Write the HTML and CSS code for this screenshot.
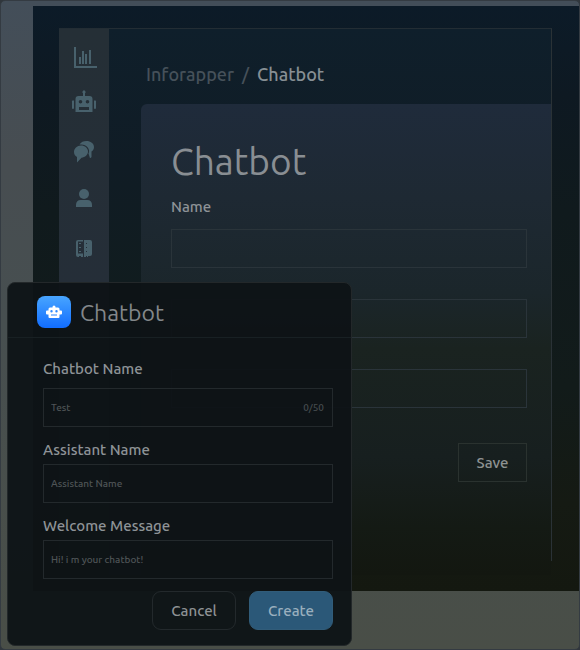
FILE: index.html
```
<!DOCTYPE html>
<html lang="en">
<head>
    <meta charset="UTF-8">
    <meta name="viewport" content="width=device-width, initial-scale=1.0">
    <title>Inforapper - Chatbot</title>
    <link rel="stylesheet" href="styles.css">
</head>
<body>
    <div class="page">
        <div class="screen">
            <div class="shell">
                <nav class="sidebar">
                    <a href="#" aria-label="Statistics">
                        <svg width="24" height="24" viewBox="0 0 24 24"><path d="M2 5h2v19h21v2H2zM7 15h2v7H7zM10 9h2v13h-2zM13 12h2v10h-2zM17 8h2v14h-2z"/></svg>
                    </a>
                    <a href="#" aria-label="Chatbot">
                        <svg width="24" height="24" viewBox="0 0 24 24"><path fill-rule="evenodd" d="M11 5.500V3.300a1.600 1.600 0 1 1 2 0V6h4.500A3 3 0 0 1 20.500 9v13h-17V9a3 3 0 0 1 3-3H11zM8.500 10a1.800 1.800 0 1 0 0 3.600 1.800 1.800 0 0 0 0-3.600zM15.500 10a1.800 1.800 0 1 0 0 3.600 1.800 1.800 0 0 0 0-3.600zM7 17v3h10v-3zM2 11v7a1 1 0 0 1-2 0v-6a1 1 0 0 1 2-1zM22 11v7a1 1 0 0 0 2 0v-6a1 1 0 0 0-2-1z"/></svg>
                    </a>
                    <a href="#" aria-label="Messages">
                        <svg width="24" height="24" viewBox="0 -2 24 24"><path d="M7.500 4.500C9 2 11.500 1 14.500 1c4 0 7.500 2.500 7.500 6 0 2-1 3.500-2.500 4.500V17c-1 1.500-2 1-2-.5l-1-3C19 9 14 3.500 7.500 4.500z"/><path d="M9 5.500c4 0 7 2.700 7 6s-3 6-6.500 6.200L5 22.500V17c-2-1-3-3-3-5 0-3.500 3-6.500 7-6.500z"/></svg>
                    </a>
                    <a href="#" aria-label="Profile">
                        <svg width="24" height="24" viewBox="0 0 24 24"><circle cx="12" cy="8" r="5"/><path d="M4 21v-2.500c0-2.500 2-4.500 4.500-4.500h7c2.500 0 4.500 2 4.500 4.500V21z"/></svg>
                    </a>
                    <a href="#" aria-label="Contacts">
                        <svg width="24" height="24" viewBox="0 -2 24 24"><path fill-rule="evenodd" d="M6 4h5v17H9v-1H7v1H6a2 2 0 0 1-2-2V6a2 2 0 0 1 2-2zM6 5.500v12h5v-12zM12 4h6a2 2 0 0 1 2 2v12a2 2 0 0 1-2 2h-2v1h-1v-1h-1v1h-2zM14 7v1h1V7zM14 11v1h1v-1zM14 15v1h1v-1z"/><path d="M7 7h2v1H7zM7 11h2v1H7zM7 15h2v1H7z"/></svg>
                    </a>
                </nav>

                <main class="content">
                    <div class="breadcrumb"><a href="#">Inforapper</a><span>/</span><strong>Chatbot</strong></div>
                    <form class="card">
                        <h1>Chatbot</h1>
                        <label for="name">Name</label>
                        <input type="text" id="name" name="name">
                        <input type="text" name="assistant" aria-label="Assistant">
                        <input type="text" name="message" aria-label="Message">
                        <button class="btn-save" type="button">Save</button>
                    </form>
                </main>
            </div>
        </div>

        <div class="modal" role="dialog" aria-labelledby="modal-title">
            <div class="modal-header">
                <span class="modal-icon">
                    <svg width="18" height="18" viewBox="0 0 18 18"><path fill-rule="evenodd" d="M7.500 4.500V4a1.500 1.500 0 0 1 3 0v.500H13A1.500 1.500 0 0 1 14.500 6v1.500H16A1 1 0 0 1 17 8.500v2a1 1 0 0 1-1 1h-1.500V14a1 1 0 0 1-1 1h-9a1 1 0 0 1-1-1v-2.500H2a1 1 0 0 1-1-1v-2a1 1 0 0 1 1-1h1.500V6A1.500 1.500 0 0 1 5 4.500zM6.500 7a1.200 1.200 0 1 0 0 2.400 1.200 1.200 0 0 0 0-2.400zM11.500 7a1.200 1.200 0 1 0 0 2.400 1.200 1.200 0 0 0 0-2.400zM6 11.500v1h6v-1z"/></svg>
                </span>
                <h2 id="modal-title">Chatbot</h2>
            </div>
            <form class="modal-form">
                <label for="chatbot-name">Chatbot Name</label>
                <div class="input-box">
                    <input type="text" id="chatbot-name" placeholder="Test" maxlength="50">
                    <span class="counter">0/50</span>
                </div>

                <label for="assistant-name">Assistant Name</label>
                <input type="text" id="assistant-name" placeholder="Assistant Name">

                <label for="welcome">Welcome Message</label>
                <input type="text" id="welcome" placeholder="Hi! i m your chatbot!">

                <div class="actions">
                    <button class="btn-cancel" type="button">Cancel</button>
                    <button class="btn-create" type="button">Create</button>
                </div>
            </form>
        </div>
    </div>
</body>
</html>
```
FILE: styles.css
```
* {
    margin: 0;
    padding: 0;
    box-sizing: border-box;
    font-family: Ubuntu, "Noto Sans", sans-serif;
}
body {
    background-color: #30363c;
}
.page {
    position: relative;
    min-height: 100vh;
    padding: 5px 0 58px 32px;
    border: 1px solid #343b42;
    border-radius: 5px;
    background: linear-gradient(180deg, #434e59 0%, #474d51 25%, #474f50 50%, #494e47 100%);
}
.screen {
    padding: 22px 27px 30px 26px;
    background: linear-gradient(180deg, #0c1b28 0%, #0e1922 15%, #101a1d 35%, #121b1a 65%, #151a13 85%, #141810 100%);
}
.shell {
    display: flex;
    border-top: 1px solid #232d34;
    border-right: 1px solid #2a3236;
}
.sidebar {
    display: flex;
    flex-direction: column;
    align-items: center;
    gap: 24px;
    width: 50px;
    padding-top: 13px;
    background: linear-gradient(180deg, #252f36, #252e38 50%, #20291f);
}
.sidebar a,
.sidebar svg {
    display: block;
}
.sidebar svg {
    fill: #48616c;
    overflow: visible;
}
.content {
    flex: 1;
    margin-bottom: -14px;
    padding: 32px 0 0 32px;
    background: linear-gradient(180deg, #0f1f2b, #101c25 25%, #111c1b 60%, #151a13);
}
.breadcrumb {
    display: flex;
    gap: 8px;
    padding-left: 5px;
    margin-bottom: 17px;
    font-size: 18px;
    line-height: 26px;
    font-weight: 500;
    color: #46515a;
}
.breadcrumb a {
    color: #46515a;
    text-decoration: none;
}
.breadcrumb strong {
    font-weight: 500;
    color: #878f94;
}
.card {
    display: flex;
    flex-direction: column;
    padding: 34px 24px 93px 30px;
    border-radius: 6px 0 0 0;
    background: linear-gradient(180deg, #1f2b3b 0%, #1e2933 20%, #1b262b 40%, #1a2320 52%, #171f1f 75%, #141a14 90%, #131710 100%);
}
.card h1 {
    margin-bottom: 8px;
    font-size: 37px;
    line-height: 48px;
    font-weight: 400;
    color: #898e93;
}
label {
    font-size: 15px;
    font-weight: 500;
    line-height: 26px;
    color: #8e9397;
}
.card label {
    margin-bottom: 9px;
}
input[type="text"] {
    width: 100%;
    height: 39px;
    padding: 0 7px;
    border: 1px solid #2a343a;
    background: none;
    outline: none;
    color: #868b8f;
    font-size: 10px;
}
.card input[type="text"] {
    margin-bottom: 31px;
}
button {
    height: 39px;
    font-size: 15px;
    font-weight: 500;
    cursor: pointer;
}
.btn-save {
    align-self: flex-end;
    width: 69px;
    margin-top: 4px;
    border: 1px solid #2a322f;
    background: none;
    color: #8e9291;
}
.modal {
    position: absolute;
    left: 6px;
    bottom: 3px;
    width: 345px;
    border: 1px solid #23282a;
    border-radius: 8px;
    background-color: rgba(14, 19, 22, .95);
}
.modal-header {
    display: flex;
    align-items: center;
    gap: 9px;
    height: 55px;
    padding: 4px 29px 0;
    border-bottom: 1px solid #182023;
}
.modal-icon {
    display: flex;
    align-items: center;
    justify-content: center;
    width: 34px;
    height: 32px;
    border-radius: 8px;
    background: linear-gradient(180deg, #48a5ff, #116dff);
}
.modal-icon svg {
    fill: #fff;
}
.modal-header h2 {
    font-size: 23px;
    font-weight: 400;
    color: #83878a;
}
.modal-form {
    display: flex;
    flex-direction: column;
    padding: 18px 18px 15px 35px;
}
.modal-form label {
    margin-bottom: 1px;
}
.modal-form input[type="text"] {
    margin-bottom: 10px;
    border-color: #23292c;
}
.input-box {
    position: relative;
    display: flex;
    margin-top: 5px;
}
.counter {
    position: absolute;
    right: 9px;
    line-height: 39px;
    font-size: 10px;
    font-weight: 500;
    color: #454b4e;
}
::placeholder {
    font-weight: 500;
    color: #4e5456;
}
.actions {
    display: flex;
    justify-content: flex-end;
    gap: 13px;
    margin-top: 2px;
}
.actions button {
    width: 84px;
    border-radius: 9px;
}
.btn-cancel {
    border: 1px solid #23292c;
    background: none;
    color: #8e9294;
}
.btn-create {
    border: 1px solid #315c79;
    background-color: #2b5878;
    color: #9aafbe;
}
```
